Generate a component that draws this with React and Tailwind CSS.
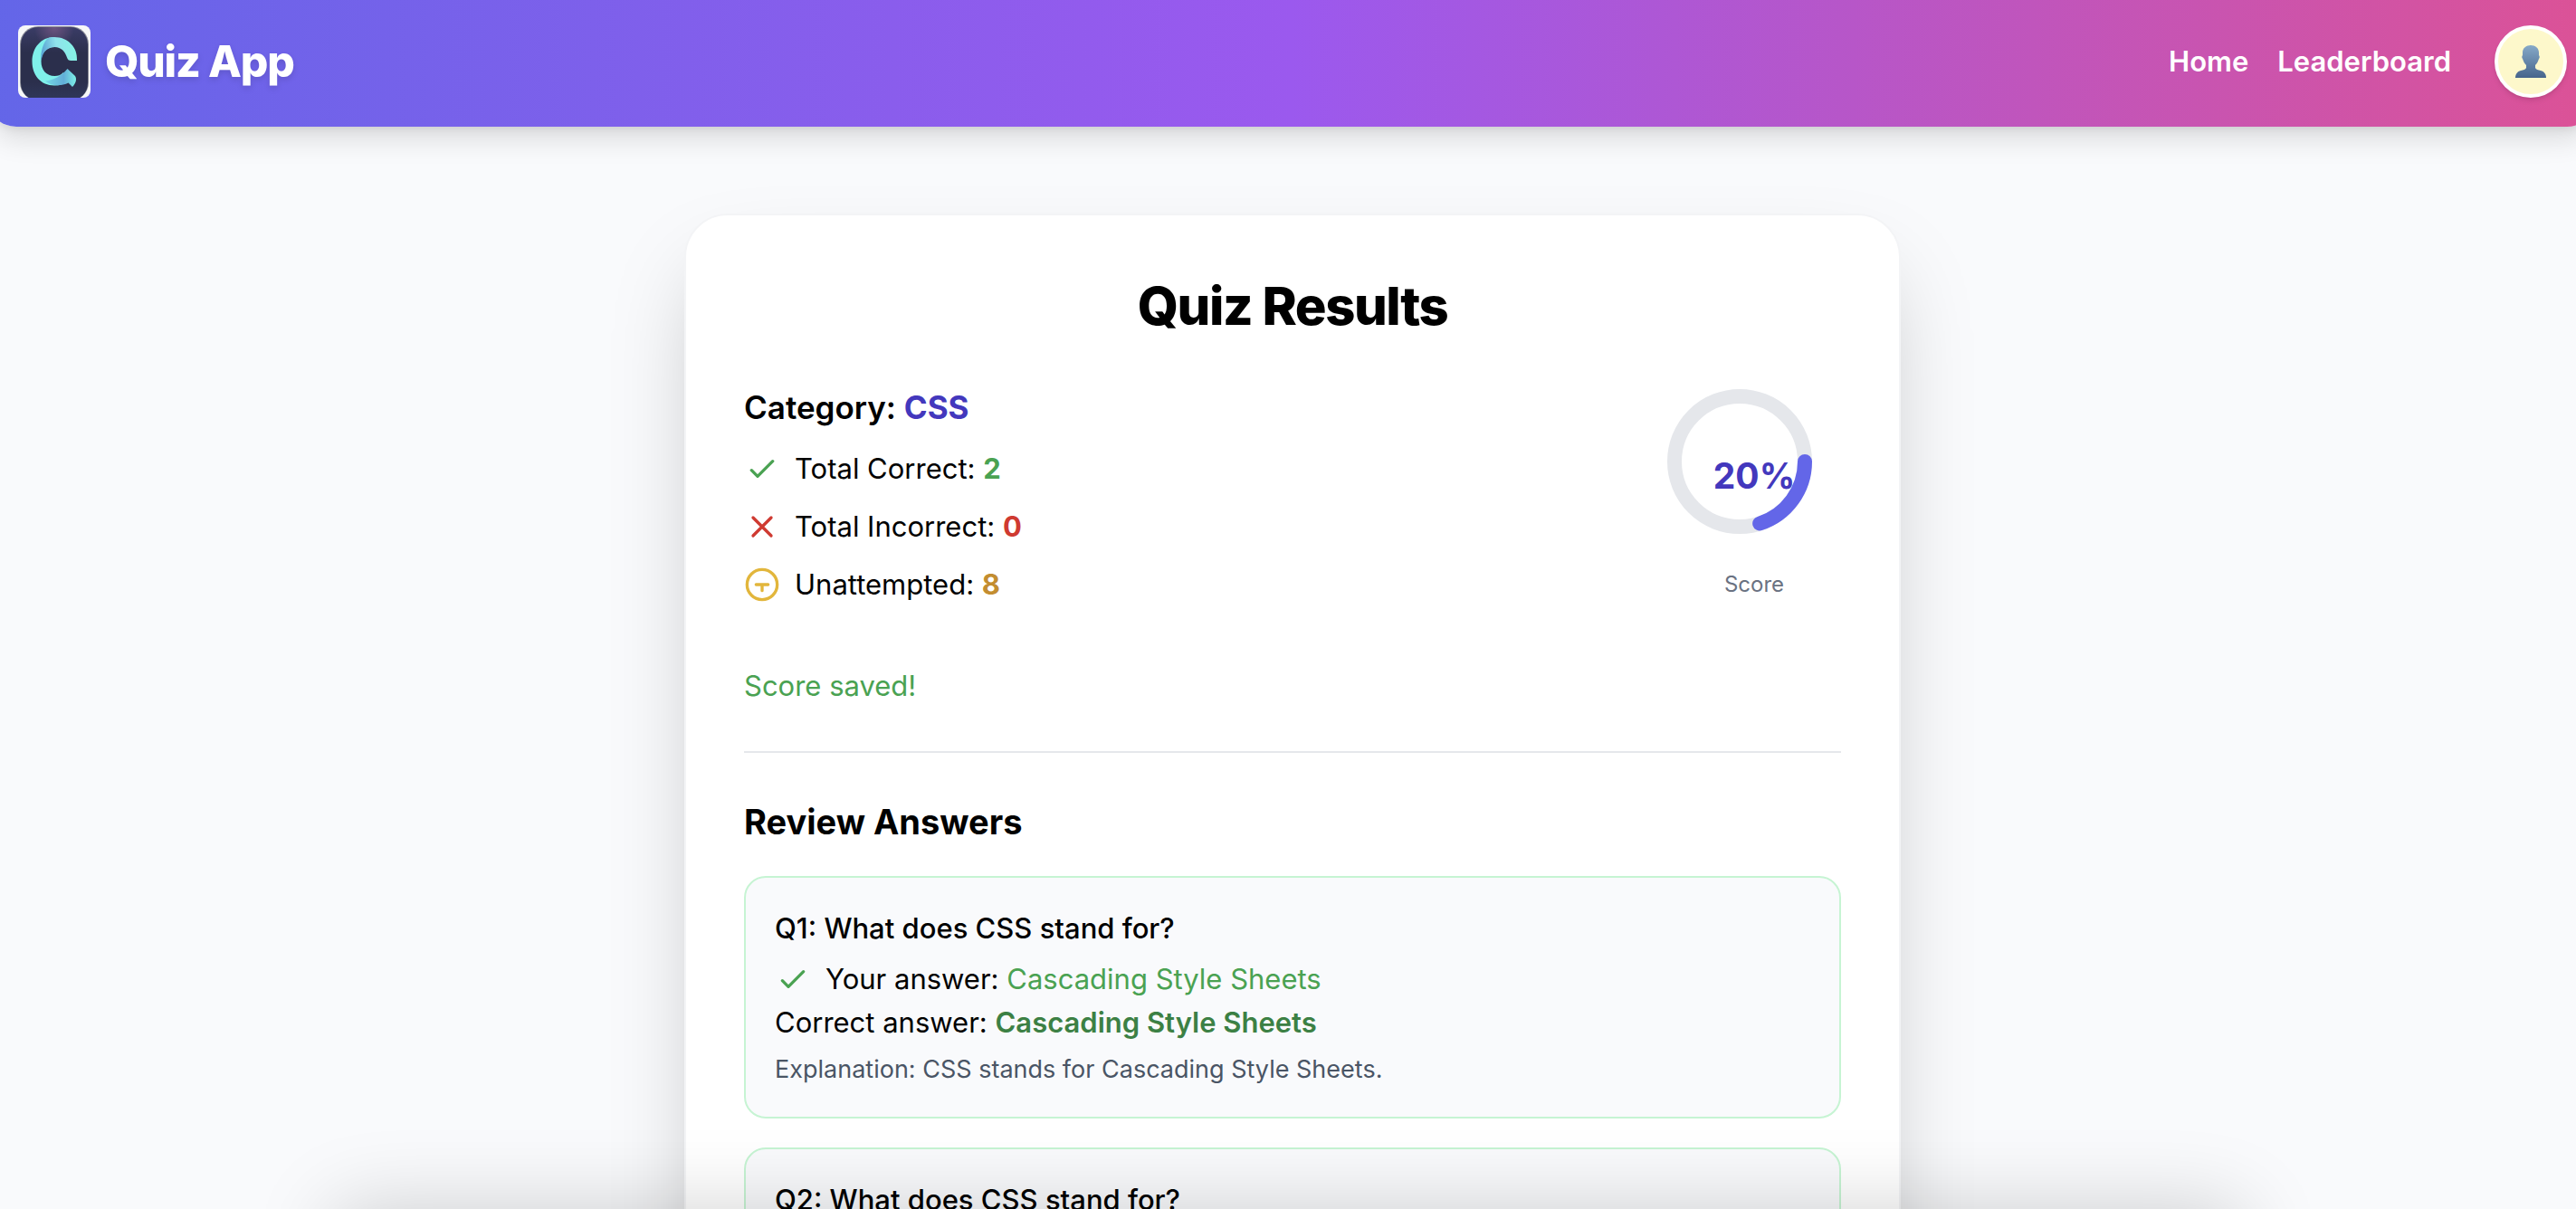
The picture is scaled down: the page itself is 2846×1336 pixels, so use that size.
const Check = () => (
  <svg viewBox="0 0 24 24" className="size-10 shrink-0 text-[#4aa252]" fill="none" stroke="currentColor" strokeWidth="2" strokeLinecap="round" strokeLinejoin="round" aria-hidden="true">
    <path d="M5 13l4 4L19 7" />
  </svg>
);

const Cross = () => (
  <svg viewBox="0 0 24 24" className="size-10 shrink-0 text-[#cf3a31]" fill="none" stroke="currentColor" strokeWidth="2" strokeLinecap="round" strokeLinejoin="round" aria-hidden="true">
    <path d="M6 18L18 6M6 6l12 12" />
  </svg>
);

const Unattempted = () => (
  <svg viewBox="0 0 24 24" className="size-10 shrink-0 text-[#e2b63c]" fill="none" stroke="currentColor" strokeWidth="2" aria-hidden="true">
    <circle cx="12" cy="12" r="10" />
    <path d="M8 12h8M12 12v4" strokeLinecap="round" />
  </svg>
);

const Logo = () => (
  <svg viewBox="0 0 80 80" className="size-20 shrink-0 rounded-lg" role="img" aria-label="Quiz App logo">
    <defs>
      <linearGradient id="tile" x1="0" y1="0" x2="0" y2="1">
        <stop offset="0" stopColor="#3a3c66" />
        <stop offset="0.35" stopColor="#2b2f4c" />
        <stop offset="0.75" stopColor="#2b2f4c" />
        <stop offset="1" stopColor="#30385b" />
      </linearGradient>
      <radialGradient id="glow" cx="0.5" cy="0" r="0.3">
        <stop offset="0" stopColor="#7a5a86" stopOpacity="0.8" />
        <stop offset="1" stopColor="#7a5a86" stopOpacity="0" />
      </radialGradient>
      <linearGradient id="top" x1="0" y1="0.6" x2="1" y2="0.5">
        <stop offset="0" stopColor="#559fd2" />
        <stop offset="0.45" stopColor="#90e2ec" />
        <stop offset="1" stopColor="#84f4e4" />
      </linearGradient>
      <linearGradient id="tail" x1="0" y1="0" x2="1" y2="0">
        <stop offset="0" stopColor="#74d8e6" />
        <stop offset="0.6" stopColor="#62aed8" />
        <stop offset="1" stopColor="#7cf0e6" />
      </linearGradient>
    </defs>
    <rect width="80" height="80" fill="#f7f8f8" />
    <rect x="2" y="1" width="76" height="82" rx="20" fill="#8b8d98" />
    <rect x="3" y="2" width="74" height="81" rx="19" fill="url(#tile)" />
    <rect x="3" y="2" width="74" height="81" rx="19" fill="url(#glow)" />
    <path d="M40 13C25 13 15.500 25 15.500 40S25 66.500 40 66.500c6 0 11-2 15-4.500l-5-10c-3 3-6 4-9.500 4C31 56 25.500 49 25.500 40S31 24 40 24z" fill="#7ff0ea" />
    <path d="M26 43c-1-2-.500-4 0-6 1.500-8 7-13 14.500-13 7 0 11.500 5 13.500 11.500.700 2.500 2 3.500 4.500 3.500H65C66 24 55 13 40 13c-4 0-6 .5-8 2-6 7-8 19-6 28z" fill="url(#top)" />
    <path d="M30 61.500c10-1 18-6 24.500-13.500l8.500 8c2 3 1 8-3 12l-4.500-4.500C48 67.500 37 67.500 30 61.500z" fill="url(#tail)" />
  </svg>
);

const Person = () => (
  <svg viewBox="0 0 36 36" className="size-9" role="img" aria-label="Profile">
    <defs>
      <linearGradient id="person" x1="0" y1="0" x2="0" y2="1">
        <stop offset="0" stopColor="#86a9c8" />
        <stop offset="1" stopColor="#46658c" />
      </linearGradient>
    </defs>
    <path d="M18 0c5 0 9 3 9 8v3c1 1 1 3 0 4-1 3-2 5-4 7v3c1 2 3 2 6 3 4 1 6 4 6 8H1c0-4 2-7 6-8 3-1 5-1 6-3v-3c-2-2-3-4-4-7-1-1-1-3 0-4V8c0-5 4-8 9-8z" fill="url(#person)" />
  </svg>
);

const Stat = ({ icon, label, value, color }) => (
  <li className="flex items-center gap-4">
    {icon}
    <span>
      {label}: <strong className={color}>{value}</strong>
    </span>
  </li>
);

const ScoreRing = ({ percent }) => (
  <div className="flex flex-col items-center">
    <div className="relative size-48">
      <svg viewBox="0 0 192 192" className="size-48" fill="none" strokeWidth="16" aria-hidden="true">
        <circle cx="80" cy="80" r="72" stroke="#e5e7eb" />
        <circle cx="80" cy="80" r="72" stroke="#6366e8" strokeLinecap="round" pathLength="100" strokeDasharray={`${percent} 100`} />
      </svg>
      <span className="absolute inset-0 flex items-center justify-center text-[39px] font-bold text-[#4338bd]">{percent}%</span>
    </div>
    <span className="mt-2 text-2xl text-gray-500">Score</span>
  </div>
);

const questions = [
  { title: "What does CSS stand for?", answer: "Cascading Style Sheets", note: "CSS stands for Cascading Style Sheets." },
  { title: "What does CSS stand for?", answer: "Cascading Style Sheets", note: "CSS stands for Cascading Style Sheets." },
];

export default function App() {
  return (
    <div className="relative h-screen overflow-hidden bg-[#f9fafc] font-[Inter,sans-serif] text-[31px] leading-[48px] text-black">
      <header className="relative -ml-[14px] -mr-[22px] flex h-[140px] items-center justify-between rounded-b-[32px] bg-linear-to-r/srgb from-[#6366e8] via-[#9b59ee] to-[#dc5296] pb-1 pl-[34px] pr-8 text-white shadow-[0_20px_30px_-6px_rgba(0,0,0,0.12),0_8px_12px_-8px_rgba(0,0,0,0.12)]">
        <div className="flex items-center gap-4">
          <Logo />
          <span className="text-5xl font-extrabold tracking-tight drop-shadow-md">Quiz App</span>
        </div>
        <nav className="flex items-center font-semibold">
          <a href="#home" className="mr-8">Home</a>
          <a href="#leaderboard" className="mr-12">Leaderboard</a>
          <button type="button" className="flex size-20 items-center justify-center rounded-full border-4 border-white bg-[#fdf8cb] shadow-md">
            <Person />
          </button>
        </nav>
      </header>

      <main className="pl-[10px] pt-24">
        <section className="mx-auto w-full max-w-[1344px] rounded-[48px] border-2 border-gray-100 bg-white p-16 shadow-[0_50px_100px_-24px_rgba(0,0,0,0.25)]">
          <h1 className="mb-12 text-center text-[58px] leading-[72px] font-extrabold tracking-tight">Quiz Results</h1>

          <div className="flex items-center justify-between">
            <div>
              <h2 className="text-[35px] leading-[56px] font-semibold">
                Category: <span className="font-bold text-[#4338bd]">CSS</span>
              </h2>
              <ul className="mt-4 flex flex-col gap-4">
                <Stat icon={<Check />} label="Total Correct" value={2} color="text-[#4aa252]" />
                <Stat icon={<Cross />} label="Total Incorrect" value={0} color="text-[#cf3a31]" />
                <Stat icon={<Unattempted />} label="Unattempted" value={8} color="text-[#c38d30]" />
              </ul>
            </div>
            <ScoreRing percent={20} />
          </div>

          <p className="mt-16 text-[#4aa252]">Score saved!</p>
          <hr className="my-12 border-t-2 border-gray-200" />

          <h2 className="mb-8 text-[38px] leading-[56px] font-bold">Review Answers</h2>
          <ol className="flex flex-col gap-8">
            {questions.map((q, i) => (
              <li key={i} className="rounded-3xl border-2 border-[#c6f4d3] bg-[#f9fafc] p-8">
                <h3 className="font-medium">Q{i + 1}: {q.title}</h3>
                <p className="mt-2 flex items-center gap-4">
                  <Check />
                  <span>Your answer: <span className="text-[#4aa252]">{q.answer}</span></span>
                </p>
                <p>Correct answer: <strong className="font-semibold text-[#3c8044]">{q.answer}</strong></p>
                <p className="mt-2 text-[27px] leading-10 text-gray-600">Explanation: {q.note}</p>
              </li>
            ))}
          </ol>
        </section>
      </main>

      <div className="absolute inset-x-[370px] top-full h-48 shadow-[0_0_90px_rgba(0,0,0,0.18)]" />
    </div>
  );
}
